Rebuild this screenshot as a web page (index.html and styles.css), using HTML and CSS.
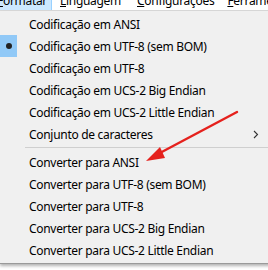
FILE: index.html
```html
<!DOCTYPE html>
<html>
<head>
<meta charset="utf-8">
<link rel="stylesheet" href="styles.css">
</head>
<body>
<div class="menubar">
  <span class="mb-item active"><u>F</u>ormatar</span>
  <span class="mb-item"><u>L</u>inguagem</span>
  <span class="mb-item narrow"><u>C</u>onfigurações</span>
  <span class="mb-item"><u>F</u>erramentas</span>
</div>
<div class="menu">
  <div class="row"><span class="gut"></span><span class="label">Codificação em ANSI</span></div>
  <div class="row"><span class="gut checked"><span class="dot"></span></span><span class="label">Codificação em UTF-8 (sem BOM)</span></div>
  <div class="row"><span class="gut"></span><span class="label">Codificação em UTF-8</span></div>
  <div class="row"><span class="gut"></span><span class="label">Codificação em UCS-2 Big Endian</span></div>
  <div class="row"><span class="gut"></span><span class="label">Codificação em UCS-2 Little Endian</span></div>
  <div class="row"><span class="gut"></span><span class="label">Conjunto de caracteres</span><span class="chev"><svg width="6" height="9" viewBox="0 0 6 9"><path d="M1 1 L4.5 4.5 L1 8" fill="none" stroke="#333" stroke-width="1.1"/></svg></span></div>
  <div class="sep"></div>
  <div class="row"><span class="gut"></span><span class="label">Converter para ANSI</span></div>
  <div class="row"><span class="gut"></span><span class="label">Converter para UTF-8 (sem BOM)</span></div>
  <div class="row"><span class="gut"></span><span class="label">Converter para UTF-8</span></div>
  <div class="row"><span class="gut"></span><span class="label">Converter para UCS-2 Big Endian</span></div>
  <div class="row"><span class="gut"></span><span class="label">Converter para UCS-2 Little Endian</span></div>
</div>
<svg class="arrow" width="268" height="270" viewBox="0 0 268 270">
  <line x1="237" y1="112" x2="158" y2="154" stroke="#e5211d" stroke-width="2.4" stroke-linecap="round"/>
  <polygon points="146,161 160,147 165,158" fill="#e5211d"/>
</svg>
</body>
</html>
```
FILE: styles.css
```css
html, body {
  margin: 0;
  padding: 0;
  background: #ffffff;
  width: 268px;
  height: 270px;
  overflow: hidden;
}
body {
  position: relative;
  font-family: "Noto Sans", "Open Sans", sans-serif;
  font-size: 12px;
  letter-spacing: -0.3px;
  color: #000;
}
u { text-decoration: underline; text-underline-offset: 1px; }
.menubar {
  height: 10px;
  overflow: hidden;
  display: flex;
  border-bottom: 1px solid #dadada;
  white-space: nowrap;
}
.mb-item {
  margin-top: -9px;
  height: 19px;
  line-height: 19px;
  padding: 0 8px;
  flex: none;
}
.mb-item.narrow { padding-right: 5px; }
.mb-item.active {
  margin-left: -11px;
  padding-left: 8px;
  width: 46px;
  background: #cce8ff;
  border: 1px solid #99d1ff;
  border-top: none;
  border-left: none;
}
.menu {
  background: #f0f0f0;
  padding: 2px 0 2px 0;
  border-bottom: 1px solid #9a9a9a;
  box-shadow: 0 2px 3px rgba(0,0,0,0.3);
  width: 300px;
}
.row {
  display: flex;
  align-items: center;
  height: 22px;
  white-space: nowrap;
}
.gut {
  width: 17px;
  height: 22px;
  margin-right: 12px;
  flex: none;
  display: flex;
  align-items: center;
  justify-content: center;
}
.gut.checked { background: #91c9f7; }
.dot {
  width: 6px;
  height: 6px;
  border-radius: 50%;
  background: #222;
}
.label { flex: none; }
.chev {
  margin-left: auto;
  margin-right: 41px;
  display: flex;
  align-items: center;
}
.sep {
  height: 1px;
  background: #cfcfcf;
  margin: 2px 0 3px 25px;
}
.arrow {
  position: absolute;
  left: 0;
  top: 0;
  pointer-events: none;
}
```
